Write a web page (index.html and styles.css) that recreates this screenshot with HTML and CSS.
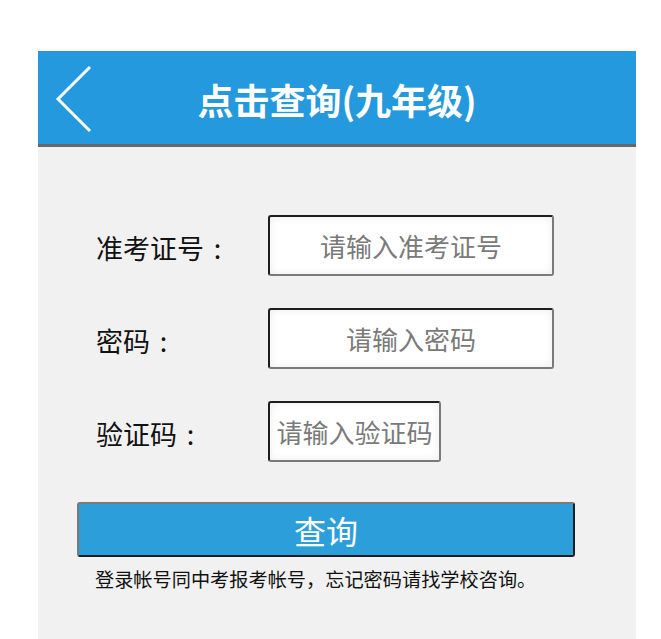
FILE: index.html
```html
<!DOCTYPE html>
<html lang="zh-CN">
<head>
<meta charset="utf-8">
<title>点击查询(九年级)</title>
<link rel="stylesheet" href="styles.css">
</head>
<body>
<div class="page">
  <header class="topbar">
    <a class="back" href="#" aria-label="返回">
      <svg width="40" height="70" viewBox="0 0 40 70"><polyline points="35,3 3,35 35,67" fill="none" stroke="#fff" stroke-width="3"/></svg>
    </a>
    <h1 class="title">点击查询(九年级)</h1>
    <span></span>
  </header>
  <main class="content">
    <form class="form">
      <div class="row">
        <label class="label">准考证号<span class="colon">:</span></label>
        <input class="field" type="text" placeholder="请输入准考证号">
      </div>
      <div class="row">
        <label class="label">密码<span class="colon">:</span></label>
        <input class="field" type="password" placeholder="请输入密码">
      </div>
      <div class="row">
        <label class="label">验证码<span class="colon">:</span></label>
        <input class="field small" type="text" placeholder="请输入验证码">
      </div>
      <button class="submit" type="button">查询</button>
      <p class="note">登录帐号同中考报考帐号，忘记密码请找学校咨询。</p>
    </form>
  </main>
</div>
</body>
</html>
```
FILE: styles.css
```css
* { box-sizing: border-box; }
html, body { margin: 0; padding: 0; background: #fff; }
body {
  font-family: "Noto Sans CJK SC", "Noto Sans", sans-serif;
  overflow: hidden;
  height: 639px;
}
.page {
  margin: 51px 0 0 38px;
  width: 598px;
}
.topbar {
  height: 96px;
  background: #2599dd;
  border-bottom: 3px solid #676767;
  display: grid;
  grid-template-columns: 1fr auto 1fr;
  align-items: center;
}
.back {
  display: flex;
  padding-left: 17px;
  padding-top: 2px;
}
.title {
  margin: 0;
  color: #fff;
  font-size: 36px;
  font-weight: 700;
  line-height: 1;
  padding-top: 2px;
}
.content {
  background: #f1f1f1;
  height: 500px;
  padding: 68px 0 0 0;
}
.form { display: flex; flex-direction: column; }
.row {
  display: flex;
  align-items: center;
  height: 61px;
  margin-bottom: 32px;
}
.row:nth-child(3) { margin-bottom: 40px; }
.label {
  width: 230px;
  padding-left: 58px;
  font-size: 27px;
  color: #111;
  line-height: 1;
  padding-top: 4px;
  white-space: nowrap;
}
.colon {
  display: inline-block;
  width: 1em;
  text-align: center;
}
.field {
  width: 286px;
  height: 61px;
  border: 2px solid;
  border-color: #1e1e1e #7a7a7a #7a7a7a #1e1e1e;
  border-radius: 3px;
  background: #fff;
  box-shadow: inset 0 0 8px rgba(0,0,0,0.08);
  font-family: inherit;
  font-size: 26px;
  text-align: center;
  padding: 0;
  color: #333;
}
.field::placeholder { color: #7a7a7a; }
.field.small { width: 173px; }
.submit {
  margin-left: 39px;
  width: 498px;
  height: 55px;
  border: 2px solid;
  border-color: #7a7a7a #1e1e1e #1e1e1e #7a7a7a;
  border-radius: 3px;
  background: #2c9ed9;
  color: #fff;
  font-family: inherit;
  font-size: 32px;
  line-height: 1;
  padding: 0;
}
.note {
  margin: 9px 0 0 57px;
  font-size: 19.2px;
  color: #111;
  line-height: 26px;
}
```
